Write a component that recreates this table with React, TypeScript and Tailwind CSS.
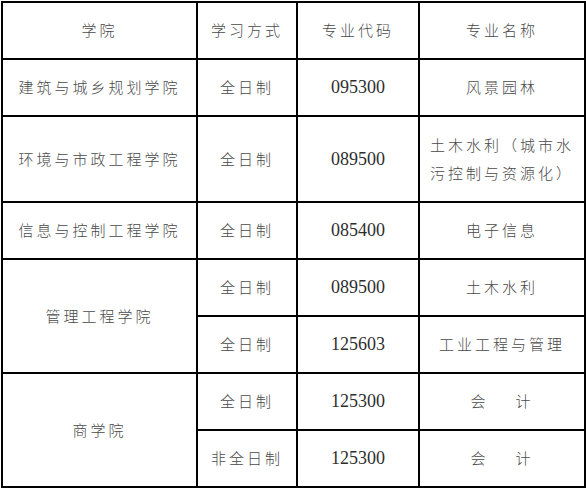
const cjk = "font-['Noto_Sans_CJK_SC',sans-serif] text-[15px] font-light tracking-[3px] text-[#4a4a4a]";
const num = "font-['Liberation_Serif',serif] text-[18px] text-[#2e2e2e]";

const Cell = ({ children, className = "" }: { children: React.ReactNode; className?: string }) => (
  <div className={`flex items-center justify-center bg-white text-center ${className}`}>{children}</div>
);

const Kuaiji = () => (
  <span className={cjk}>
    会<span className="inline-block w-[27px]" />计
  </span>
);

export default function App() {
  return (
    <div className="ml-[1px] mt-[1px] w-[585px] bg-white">
      <div className="grid grid-cols-[193px_98px_120px_164px] grid-rows-[55px_55px_84px_55px_55px_55px_55px_55px] gap-[2px] bg-black p-[2px]">
        <Cell><span className={cjk}>学院</span></Cell>
        <Cell><span className={cjk}>学习方式</span></Cell>
        <Cell><span className={cjk}>专业代码</span></Cell>
        <Cell><span className={cjk}>专业名称</span></Cell>

        <Cell><span className={cjk}>建筑与城乡规划学院</span></Cell>
        <Cell><span className={cjk}>全日制</span></Cell>
        <Cell><span className={num}>095300</span></Cell>
        <Cell><span className={cjk}>风景园林</span></Cell>

        <Cell><span className={cjk}>环境与市政工程学院</span></Cell>
        <Cell><span className={cjk}>全日制</span></Cell>
        <Cell><span className={num}>089500</span></Cell>
        <Cell className="px-[10px]">
          <span className={`${cjk} text-left leading-[28px]`}>
            土木水利（城市水
            <br />
            污控制与资源化）
          </span>
        </Cell>

        <Cell><span className={cjk}>信息与控制工程学院</span></Cell>
        <Cell><span className={cjk}>全日制</span></Cell>
        <Cell><span className={num}>085400</span></Cell>
        <Cell><span className={cjk}>电子信息</span></Cell>

        <Cell className="row-span-2"><span className={cjk}>管理工程学院</span></Cell>
        <Cell><span className={cjk}>全日制</span></Cell>
        <Cell><span className={num}>089500</span></Cell>
        <Cell><span className={cjk}>土木水利</span></Cell>
        <Cell><span className={cjk}>全日制</span></Cell>
        <Cell><span className={num}>125603</span></Cell>
        <Cell><span className={cjk}>工业工程与管理</span></Cell>

        <Cell className="row-span-2"><span className={cjk}>商学院</span></Cell>
        <Cell><span className={cjk}>全日制</span></Cell>
        <Cell><span className={num}>125300</span></Cell>
        <Cell><Kuaiji /></Cell>
        <Cell><span className={cjk}>非全日制</span></Cell>
        <Cell><span className={num}>125300</span></Cell>
        <Cell><Kuaiji /></Cell>
      </div>
    </div>
  );
}
